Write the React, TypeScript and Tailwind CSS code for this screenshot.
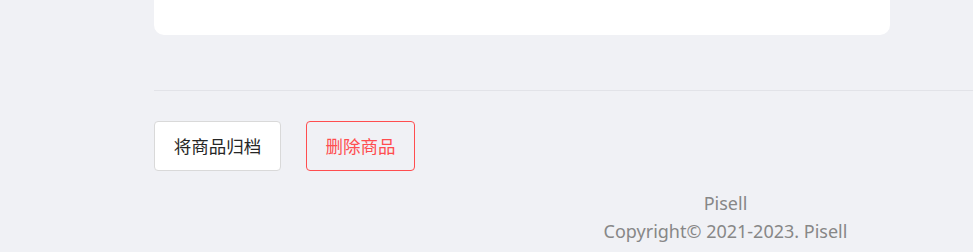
import React from 'react';

const App: React.FC = () => {
  return (
    <div
      className="min-h-screen w-full overflow-hidden bg-[#f0f1f5]"
      style={{ fontFamily: '"Noto Sans", "Noto Sans CJK SC", sans-serif' }}
    >
      <div className="pl-[154px]">
        <div className="w-[1143px]">
          <div className="w-[736px] h-[35px] bg-white rounded-b-[10px]" />

          <div className="mt-[55px] border-t border-[#e2e3e8]" />

          <div className="mt-[30px] flex gap-[25px]">
            <button className="w-[127px] h-[50px] bg-white border border-[#d9d9d9] rounded-[4px] text-[17.5px] text-[#262626]">
              将商品归档
            </button>
            <button className="w-[109px] h-[50px] bg-transparent border border-[#ff4d4f] rounded-[4px] text-[17.5px] text-[#ff4d4f]">
              删除商品
            </button>
          </div>

          <footer className="mt-[18px] text-center text-[18px] leading-[28px] text-[#878787]">
            <div>Pisell</div>
            <div>Copyright© 2021-2023. Pisell</div>
          </footer>
        </div>
      </div>
    </div>
  );
};

export default App;
